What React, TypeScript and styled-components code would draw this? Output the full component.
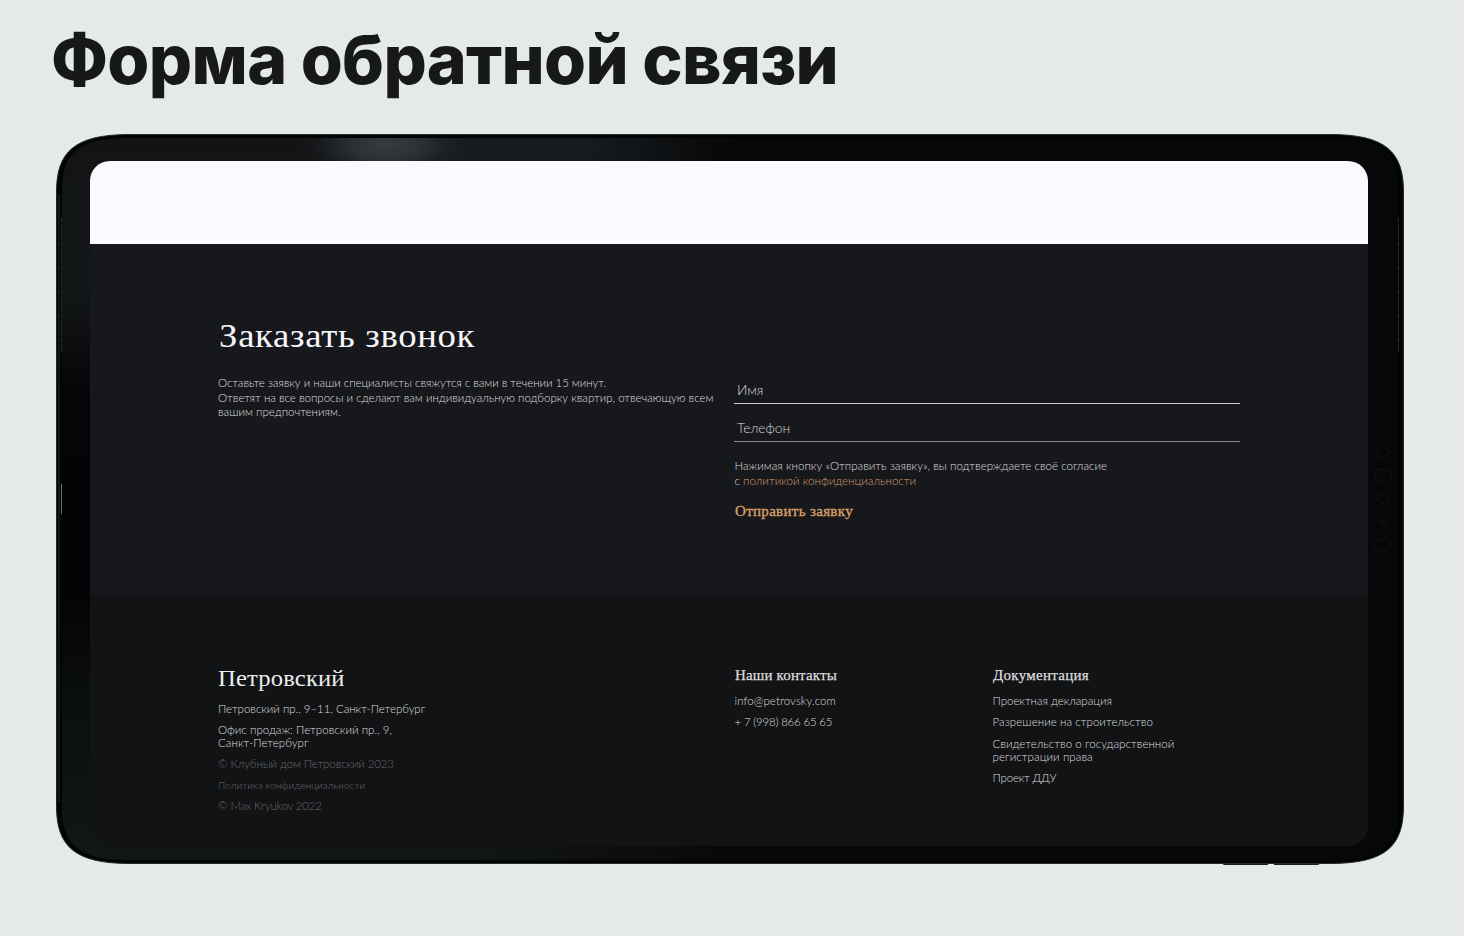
import React from 'react';
import styled, { createGlobalStyle } from 'styled-components';

const Global = createGlobalStyle`
  * { box-sizing: border-box; }
  html, body { margin: 0; padding: 0; background: #e5e9ea; }
`;

const Page = styled.main`
  width: 1464px;
  height: 936px;
  overflow: hidden;
  background: #e5e9ea;
  padding: 17px 60px 0 51px;
`;

const Title = styled.h1`
  margin: 0 0 33px;
  height: 84px;
  font: 800 68px/84px Inter, sans-serif;
  letter-spacing: -0.68px;
  color: #17181a;
  white-space: nowrap;
`;

const Tablet = styled.section`
  position: relative;
  width: 1348px;
  height: 730px;
  margin-left: 5px;
  padding: 27px 36px 18px 34px;
`;

const FrameArt = styled.svg`
  position: absolute;
  inset: 0;
  width: 1348px;
  height: 733px;
  overflow: visible;
`;

const Screen = styled.div`
  position: relative;
  display: flex;
  flex-direction: column;
  width: 1278px;
  height: 685px;
  border-radius: 20px;
  overflow: hidden;
  font-family: Lato, sans-serif;
`;

const Blank = styled.div`
  height: 83px;
  background: #faf9fe;
`;

const Order = styled.section`
  display: grid;
  grid-template-columns: 516px 506px;
  height: 351px;
  padding: 74px 128px 0;
  background: #17181c;
`;

const OrderForm = styled.form`
  display: flex;
  flex-direction: column;
  align-items: flex-start;
  padding-top: 62px;
`;

const Heading = styled.h2`
  margin: 0 0 22px;
  padding-left: 1px;
  width: max-content;
  font: 400 34px/36px 'Liberation Serif', serif;
  letter-spacing: 0.62px;
  transform: scaleX(1.08);
  transform-origin: 0 50%;
  color: #f6f6f8;
  white-space: nowrap;
`;

const Field = styled.label<{ $tone: string }>`
  display: flex;
  align-items: center;
  width: 506px;
  height: 24px;
  margin-bottom: 14px;
  padding: 0 3px 5px;
  border-bottom: 1px solid ${(p) => p.$tone};
  font-size: 13.8px;
  line-height: 17px;
  color: #d8d8da;
  font-weight: 300;
`;

const Consent = styled.div`
  padding: 3px 0 0 0.5px;
`;

const Line = styled.p<{ $ls?: number; $size?: number; $lh?: number; $gap?: number; $color?: string }>`
  margin: 0 0 ${(p) => p.$gap ?? 0}px;
  font-weight: 300;
  font-size: ${(p) => p.$size ?? 11.5}px;
  line-height: ${(p) => p.$lh ?? 14.6}px;
  letter-spacing: ${(p) => p.$ls ?? 0}px;
  color: ${(p) => p.$color ?? '#dcdcde'};
  white-space: nowrap;
  width: max-content;
`;

const Accent = styled.a`
  color: #d49a6c;
`;

const Submit = styled.button`
  margin: 15px 0 0 0.5px;
  padding: 0;
  border: 0;
  background: none;
  font: 400 14px/18px 'Liberation Serif', serif;
  letter-spacing: 0.3px;
  transform: scaleX(1.07);
  transform-origin: 0 50%;
  -webkit-text-stroke: 0.3px #dca06c;
  color: #dca06c;
`;

const Footer = styled.footer`
  display: grid;
  grid-template-columns: 516.5px 258px 248px;
  flex: 1;
  padding: 70px 128px 0;
  background: #121315;
`;

const Brand = styled.h3`
  margin: 1px 0 9.5px;
  font: 400 23px/26px 'Liberation Serif', serif;
  letter-spacing: 0.15px;
  transform: scaleX(1.07);
  transform-origin: 0 50%;
  color: #ececee;
  width: max-content;
`;

const ColumnTitle = styled.h4<{ $ls: number }>`
  margin: 3px 0 10px;
  font: 400 14px/16px 'Liberation Serif', serif;
  letter-spacing: ${(p) => p.$ls}px;
  transform: scaleX(1.07);
  transform-origin: 0 50%;
  -webkit-text-stroke: 0.25px #dcdcde;
  color: #dcdcde;
  width: max-content;
`;

const Column = styled.div``;
const MUTED = '#66676b';

export default function App() {
  return (
    <Page>
      <Global />
      <Title>Форма обратной связи</Title>
      <Tablet>
        <FrameArt viewBox="0 0 1348 733" aria-hidden="true">
          <defs>
            <linearGradient id="left" x1="0" y1="0" x2="0" y2="1">
              <stop offset="0" stopColor="#111315" />
              <stop offset="0.2" stopColor="#141718" />
              <stop offset="0.36" stopColor="#040506" />
              <stop offset="0.62" stopColor="#020304" />
              <stop offset="0.8" stopColor="#0c0f10" />
              <stop offset="1" stopColor="#131617" />
            </linearGradient>
            <linearGradient id="shade" x1="0" y1="0" x2="1" y2="0">
              <stop offset="0.3" stopColor="#060708" stopOpacity="0" />
              <stop offset="0.52" stopColor="#060708" stopOpacity="1" />
            </linearGradient>
            <radialGradient id="glow">
              <stop offset="0" stopColor="#373c3f" />
              <stop offset="0.4" stopColor="#2f3235" stopOpacity="0.9" />
              <stop offset="1" stopColor="#17191c" stopOpacity="0" />
            </radialGradient>
            <radialGradient id="sheen">
              <stop offset="0.3" stopColor="#171b1f" />
              <stop offset="1" stopColor="#171b1f" stopOpacity="0" />
            </radialGradient>
            <clipPath id="bezel">
              <rect x="60" y="4" width="1220" height="24" />
            </clipPath>
          </defs>
          <path d="M1165 729h47v2h-44zM1218 729h47l-3 2h-44z" fill="#1c1d1f" />
          <path
            d="M74 .5H1274C1330 .5 1347.5 18 1347.5 58V672C1347.5 712 1330 729.5 1274 729.5H74C18 729.5 .5 712 .5 672V58C.5 18 18 .5 74 .5Z"
            fill="#020303"
            stroke="#25292b"
          />
          <path
            d="M74 4H1274C1328 4 1342 20 1342 58V672C1342 710 1328 726 1274 726H74C20 726 6 710 6 672V58C6 20 20 4 74 4Z"
            fill="url(#left)"
          />
          <path
            d="M74 4H1274C1328 4 1342 20 1342 58V672C1342 710 1328 726 1274 726H74C20 726 6 710 6 672V58C6 20 20 4 74 4Z"
            fill="url(#shade)"
          />
          <g clipPath="url(#bezel)">
            <ellipse cx="460" cy="14" rx="200" ry="60" fill="url(#sheen)" />
            <ellipse cx="330" cy="10" rx="92" ry="44" fill="url(#glow)" />
          </g>
          <path d="M3 60V668" stroke="#2a2d2f" />
          <path d="M5.5 350v30" stroke="#6a6d6f" />
          <path d="M5.5 84v134M1342.5 84v134" stroke="#292c2f" strokeDasharray="5 1" />
          <g fill="none" stroke="#121415">
            <ellipse cx="1326.5" cy="318.5" rx="6.3" ry="4.5" />
            <ellipse cx="1327" cy="341" rx="8.7" ry="6.2" />
            <ellipse cx="1327" cy="365" rx="6" ry="4.5" />
            <ellipse cx="1326.5" cy="388.5" rx="2.6" ry="2.3" />
            <ellipse cx="1327" cy="411" rx="8.7" ry="6.2" />
          </g>
        </FrameArt>
        <Screen>
          <Blank />
          <Order>
            <Column>
              <Heading>Заказать звонок</Heading>
              <Line $ls={-0.06}>Оставьте заявку и наши специалисты свяжутся с вами в течении 15 минут.</Line>
              <Line $ls={-0.01}>Ответят на все вопросы и сделают вам индивидуальную подборку квартир, отвечающую всем</Line>
              <Line>вашим предпочтениям.</Line>
            </Column>
            <OrderForm>
              <Field $tone="#c3c8c9">Имя</Field>
              <Field $tone="#8b8b8f">Телефон</Field>
              <Consent>
                <Line $ls={0.02}>Нажимая кнопку «Отправить заявку», вы подтверждаете своё согласие</Line>
                <Line $ls={0.03}>с <Accent>политикой конфиденциальности</Accent></Line>
              </Consent>
              <Submit type="button">Отправить заявку</Submit>
            </OrderForm>
          </Order>
          <Footer>
            <Column>
              <Brand>Петровский</Brand>
              <Line $gap={8} $lh={13.3} $ls={-0.03}>Петровский пр., 9–11, Санкт-Петербург</Line>
              <Line $lh={13.3} $ls={0.03}>Офис продаж: Петровский пр., 9,</Line>
              <Line $gap={8} $lh={13.3} $ls={0.06}>Санкт-Петербург</Line>
              <Line $gap={8} $lh={13.3} $ls={-0.12} $color={MUTED}>© Клубный дом Петровский 2023</Line>
              <Line $gap={7} $lh={13} $size={10} $ls={0.08} $color={MUTED}>Политика конфиденциальности</Line>
              <Line $lh={13.3} $ls={-0.2} $color={MUTED}>© Max Kryukov 2022</Line>
            </Column>
            <Column>
              <ColumnTitle $ls={0.15}>Наши контакты</ColumnTitle>
              <Line $gap={8} $lh={13.3} $ls={0.09}>info@petrovsky.com</Line>
              <Line $lh={13.3} $ls={-0.2}>+ 7 (998) 866 65 65</Line>
            </Column>
            <Column>
              <ColumnTitle $ls={0.27}>Документация</ColumnTitle>
              <Line $gap={8} $lh={13.3} $ls={-0.03}>Проектная декларация</Line>
              <Line $gap={8} $lh={13.3} $ls={0.06}>Разрешение на строительство</Line>
              <Line $lh={13.3} $ls={0.05}>Свидетельство о государственной</Line>
              <Line $gap={8} $lh={13.3} $ls={0.08}>регистрации права</Line>
              <Line $lh={13.3} $ls={-0.2}>Проект ДДУ</Line>
            </Column>
          </Footer>
        </Screen>
      </Tablet>
    </Page>
  );
}
